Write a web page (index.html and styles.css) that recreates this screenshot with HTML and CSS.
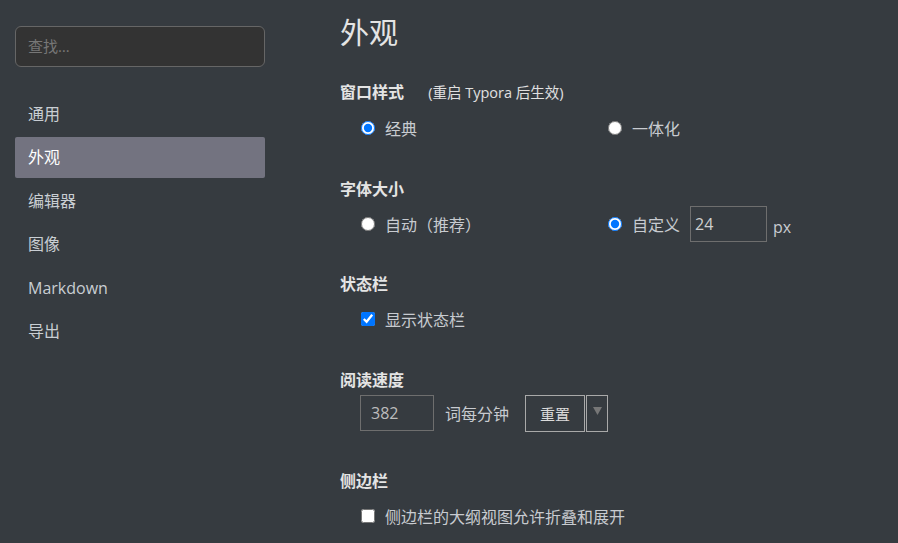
FILE: index.html
```html
<!DOCTYPE html>
<html lang="zh">
<head>
<meta charset="utf-8">
<title>偏好设置</title>
<link rel="stylesheet" href="styles.css">
</head>
<body>
<div class="app">
  <aside class="sidebar">
    <div class="search">查找…</div>
    <nav class="nav">
      <div class="nav-item">通用</div>
      <div class="nav-item active">外观</div>
      <div class="nav-item">编辑器</div>
      <div class="nav-item">图像</div>
      <div class="nav-item">Markdown</div>
      <div class="nav-item">导出</div>
    </nav>
  </aside>
  <main class="content">
    <h1 class="title">外观</h1>

    <section class="section s1">
      <div class="section-title">窗口样式 <span class="hint">(重启 Typora 后生效)</span></div>
      <div class="row grid2">
        <label class="opt"><input type="radio" name="win" checked><span>经典</span></label>
        <label class="opt"><input type="radio" name="win"><span>一体化</span></label>
      </div>
    </section>

    <section class="section s2">
      <div class="section-title">字体大小</div>
      <div class="row grid2">
        <label class="opt"><input type="radio" name="fs"><span>自动（推荐）</span></label>
        <label class="opt"><input type="radio" name="fs" checked><span>自定义</span><span class="field w76">24</span><span class="unit">px</span></label>
      </div>
    </section>

    <section class="section s3">
      <div class="section-title">状态栏</div>
      <div class="row">
        <label class="opt"><input type="checkbox" checked><span>显示状态栏</span></label>
      </div>
    </section>

    <section class="section s4">
      <div class="section-title">阅读速度</div>
      <div class="row speed">
        <span class="field w74">382</span>
        <span class="speed-label">词每分钟</span>
        <div class="btn-group">
          <span class="btn">重置</span>
          <span class="btn caret"><svg width="9" height="8" viewBox="0 0 9 8"><path d="M0 0H9L4.5 8Z" fill="#777"/></svg></span>
        </div>
      </div>
    </section>

    <section class="section s5">
      <div class="section-title">侧边栏</div>
      <div class="row">
        <label class="opt"><input type="checkbox"><span>侧边栏的大纲视图允许折叠和展开</span></label>
      </div>
    </section>
  </main>
</div>
</body>
</html>
```
FILE: styles.css
```css
* { box-sizing: border-box; }
html, body {
  margin: 0;
  padding: 0;
  background: #363b40;
  height: 100%;
  overflow: hidden;
}
body {
  font-family: "Open Sans", "Noto Sans CJK SC", sans-serif;
  color: #d6d6d6;
  font-size: 16px;
}
.app {
  display: flex;
  height: 100%;
}
.sidebar {
  width: 280px;
  padding: 26px 15px 0 15px;
  flex-shrink: 0;
}
.search {
  height: 41px;
  border: 1px solid #666;
  border-radius: 6px;
  background: #333333;
  color: #777;
  font-size: 15px;
  line-height: 39px;
  padding-left: 12px;
}
.nav {
  margin-top: 27px;
  display: flex;
  flex-direction: column;
  gap: 2.4px;
}
.nav-item {
  height: 41px;
  line-height: 41px;
  padding-left: 13px;
  color: #c9ced3;
  font-size: 16px;
  border-radius: 2px;
}
.nav-item.active {
  background: #737380;
  color: #ffffff;
}
.content {
  padding-left: 60px;
  padding-top: 15px;
  flex: 1;
}
.title {
  margin: 0;
  font-size: 29px;
  font-weight: 400;
  line-height: 36px;
  color: #e4e4e4;
}
.section {
  margin-top: 31px;
}
.s2 { margin-top: 33px; }
.s3 { margin-top: 32px; }
.s4 { margin-top: 33px; }
.s5 { margin-top: 40px; }
.section-title {
  font-weight: 700;
  font-size: 16px;
  line-height: 20px;
  color: #e4e4e4;
}
.hint {
  font-weight: 400;
  font-size: 14.5px;
  margin-left: 20px;
  color: #e0e0e0;
}
.row {
  margin-top: 7px;
  height: 36px;
  padding-left: 21px;
  display: flex;
  align-items: center;
}
.s4 .row {
  margin-top: 5px;
  padding-left: 20px;
}
.grid2 {
  display: grid;
  grid-template-columns: 247px auto;
  align-items: center;
}
.opt {
  display: flex;
  align-items: center;
  color: #c8cbd0;
}
.opt input {
  margin: 0 10px 0 0;
  width: 14px;
  height: 14px;
}
.field {
  height: 36px;
  border: 1px solid #6e6e6e;
  line-height: 34px;
  font-size: 16px;
  color: #cfcfcf;
}
.w76 {
  width: 77px;
  margin-left: 10px;
  padding-left: 4px;
}
.unit {
  margin-left: 6px;
  margin-top: 6px;
}
.w74 {
  width: 74px;
  padding-left: 10px;
  color: #bdbdbd;
}
.speed-label {
  margin-left: 11px;
  color: #c8cbd0;
}
.btn-group {
  display: flex;
  gap: 1px;
  margin-left: 16px;
}
.btn {
  height: 37px;
  width: 60px;
  border: 1px solid #a9a9a9;
  display: flex;
  align-items: center;
  justify-content: center;
  font-size: 15px;
  color: #dcdcdc;
}
.btn.caret {
  width: 22px;
  padding-bottom: 4px;
}
```
